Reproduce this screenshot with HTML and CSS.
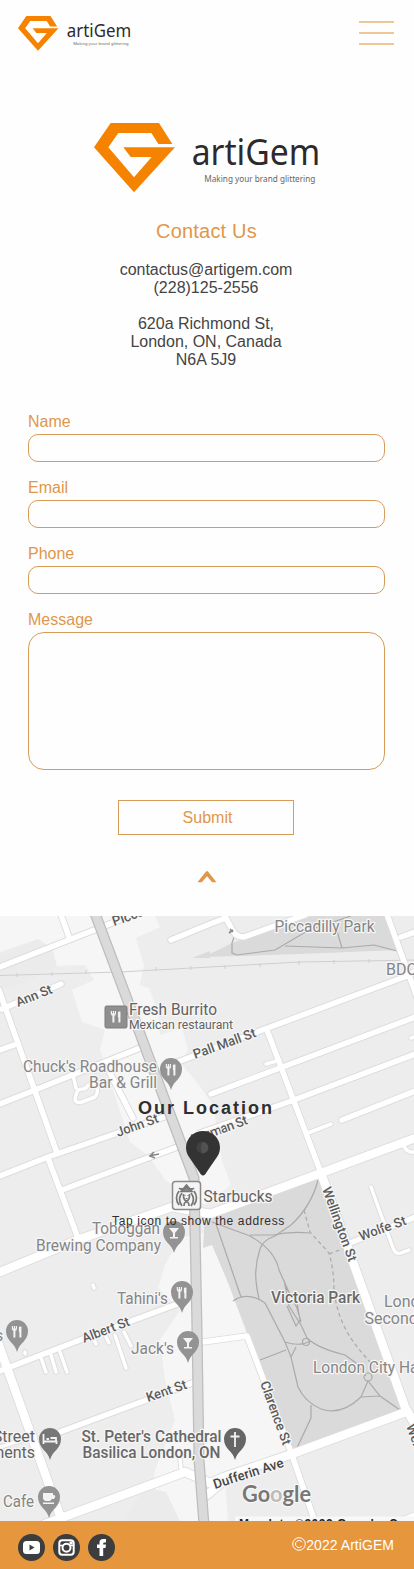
FILE: index.html
```html
<!DOCTYPE html>
<html lang="en">
<head>
<meta charset="utf-8">
<meta name="viewport" content="width=device-width, initial-scale=1">
<title>artiGem - Contact Us</title>
<link rel="stylesheet" href="styles.css">
</head>
<body>
<svg class="defs" width="0" height="0" aria-hidden="true">
  <symbol id="logo" viewBox="45 40 681 210">
    <path fill="#f58300" d="M45 113 95 40H240L280 103H238L217 70H118L88 113 165 203 218 142H155L133 113H288L165 248Z"/>
    <text class="logo-name" x="338" y="165" textLength="386" lengthAdjust="spacingAndGlyphs">artiGem</text>
    <text class="logo-tag" x="376" y="217" textLength="333" lengthAdjust="spacingAndGlyphs">Making your brand glittering</text>
  </symbol>
</svg>

<header class="topbar">
  <svg class="logo-small"><use href="#logo"/></svg>
  <div class="menu"><span></span><span></span><span></span></div>
</header>

<main>
  <section class="contact">
    <svg class="logo-large"><use href="#logo"/></svg>
    <h1>Contact Us</h1>
    <p>contactus@artigem.com<br>(228)125-2556</p>
    <p>620a Richmond St,<br>London, ON, Canada<br>N6A 5J9</p>
  </section>

  <form class="form">
    <label>Name<input type="text"></label>
    <label>Email<input type="text"></label>
    <label>Phone<input type="text"></label>
    <label>Message<textarea></textarea></label>
    <button type="button">Submit</button>
  </form>

  <div class="to-top">
    <svg width="20" height="12" viewBox="0 0 20 12"><path d="M0.5 11.2 9.2 0.3H10.8L19.5 11.2H15.2L10 5.2 4.8 11.2Z" fill="#e0974a"/></svg>
  </div>

  <section class="location">
    <svg class="map" viewBox="0 916 414 605" preserveAspectRatio="none">
      <defs>
        <g id="lanes">
          <path d="M73 1075 76 1088M41 1358 46 1372M51 1355 56 1372M60 1352 67 1372M115 1335 126 1368M124 1332 131 1346M93 1337 96 1344M106 1337 109 1343M25 1354V1352M93 1285 94 1288"/>
          <path d="M77 1092Q78 1089 83 1089L86 1088Q89 1082 95 1085 100 1090 95 1097L82 1102Q75 1104 75 1098Z"/>
          <path d="M0 1447 35 1436M266 1064 280 1060M308 1133 331 1124M411 1038 418 1036M404 1146Q407 1153 414 1152M371 1187 393 1248Q396 1255 401 1253L409 1250M180 1459 181 1468"/>
        </g>
        <g id="streets">
          <path d="M0 967 102 927 150 908M60 912 69 937M171 940 210 924 226 918M222 911 233 931Q236 937 244 937L305 915"/>
          <path d="M2 1009 61 984M-1 990 57 1153M48 1158 78 1238M0 1050 14 1045M0 1104 35 1090 140 1048M110 1073 133 1118"/>
          <path d="M0 1176 48 1157 167 1116M62 1190 180 1146M175 1063 265 1029 407 976 418 970M267 1030 321 1173"/>
          <path d="M211 1094 280 1068 418 1016M200 1133 294 1100 418 1053M342 1120 418 1090M350 1243 418 1216M401 937 418 931"/>
          <path d="M0 1371 80 1340 180 1303M60 1432 195 1382M203 1342 247 1336 292 1455 316 1525M385 909 418 1000M400 1521 418 1514"/>
        </g>
        <g id="avenues">
          <path d="M0 1272 80 1239 172 1207 210 1214 321 1173 418 1137M321 1173 405 1407 418 1430"/>
          <path d="M-4 1337 62 1521M45 1524 185 1472 210 1483 224 1477 292 1454 406 1412M207 1495 230 1476"/>
        </g>
        <g id="pin"><path d="M0 20C-2 11-11 9-11-1A11 11 0 0 1 11-1C11 9 2 11 0 20Z"/></g>
        <g id="fork" fill="none" stroke="#f3f3f3">
          <path stroke-width="1.2" d="M-4.6-6V-2.5M-2.6-6V-1.5M-.6-6V-2.5"/><path stroke-width="2" d="M-2.6-2V5.5M3.4-5.5V5.5"/><path stroke-width="2.2" d="M-4.6-2.5H-.6M3-5V0"/>
        </g>
        <g id="glass"><path fill="#f3f3f3" d="M-5-5H5L1 0V4H4V5.5H-4V4H-1V0Z"/></g>
      </defs>

      <rect y="916" width="414" height="605" fill="#ededed"/>
      <g fill="#f6f6f6">
        <path d="M0 916H155L160 927 136 938 144 965 140 985 149 988 158 1012 160 1035 182 1028 188 1050 180 1062 199 1085 213 1105 222 1160 231 1185 205 1205 165 1180 160 1172 147 1155 130 1142 100 1050 105 1030 82 1022 72 990 94 980 85 965 55 966 50 947 38 939 0 952Z"/>
        <path d="M165 1265 180 1238 207 1232 230 1288 292 1455 225 1480 228 1521H150L155 1470 175 1420 165 1380 160 1340 180 1310 158 1288Z"/>
      </g>
      <path fill="#ebebeb" d="M125 1521 145 1487 166 1492 180 1521ZM0 955 38 939 53 950 57 967 20 985 0 990Z"/>
      <path fill="#dadada" d="M204 957 232 943 310 916H388L399 950 300 954ZM205 1215 319 1179 404 1411 293 1454 227 1280 212 1245 203 1248ZM192 958 210 951V958Z"/>
      <g class="rail"><path d="M0 975.5 120 972 300 962 418 960M17 973V977M52 972V976M86 970V974M156 967V971M191 966V970M225 965V969M260 963V967M299 961V965M334 960V964M369 959V963"/></g>
      <g class="trail">
        <path d="M235 934 232 943V953L237 955 275 950 309 930 351 916M285 946 342 948 374 945 397 951M337 931 342 948"/>
        <path d="M318 1180C313 1200 304 1213 291 1225L275 1236Q263 1240 260 1249C253 1270 256 1285 259 1299"/>
        <path d="M212 1222 250 1236Q275 1250 279 1270L288 1290 297 1308 301 1322M250 1235H273Q290 1231 310 1233M216 1224 241 1297M233 1301Q248 1291 265 1303L285 1342 291 1357 298 1387Q305 1402 321 1409 341 1416 361 1397L368 1381 380 1396 400 1410M260 1360 286 1350M285 1342Q300 1347 310 1341M284 1280 289 1306 301 1325 307 1338Q317 1348 345 1355L356 1363 366 1376M285 1287 297 1303 300 1320 296 1326 287 1306M311 1405 311 1418 295 1452M361 1397 380 1396M285 1342 291 1357 296 1347"/>
        <circle cx="306" cy="1342" r="3.5"/><circle cx="368" cy="1377" r="4"/>
        <path stroke-dasharray="4 3" d="M304 1210 310 1232 329 1253Q334 1270 334 1290C338 1325 353 1343 370 1362M329 1254 350 1246"/>
      </g>
      <use href="#lanes" class="lane-edge"/><use href="#streets" class="street-edge"/><use href="#avenues" class="avenue-edge"/>
      <use href="#lanes" class="lane"/><use href="#streets" class="street"/><use href="#avenues" class="avenue"/>
      <path class="main-edge" d="M93 908 194 1178 197 1330 199 1460 204 1525"/>
      <path class="main-road" d="M93 908 194 1178 197 1330 199 1460 204 1525"/>
      <path fill="none" stroke="#888" stroke-width="1.6" d="M149 1156 159 1154M154 1152 150 1156 155 1158M230 929 233 932M229 933 233 930"/>

      <g class="pins">
        <rect x="105" y="1006" width="22" height="22" rx="1.5" fill="#8f8f8f" stroke="#7d7d7d"/>
        <use href="#fork" x="116" y="1017"/>
        <use href="#pin" x="171" y="1070"/><use href="#fork" x="171" y="1070"/>
        <use href="#pin" x="174" y="1233"/><use href="#glass" x="174" y="1233"/>
        <use href="#pin" x="182" y="1293"/><use href="#fork" x="182" y="1293"/>
        <use href="#pin" x="188" y="1343"/><use href="#glass" x="188" y="1343"/>
        <use href="#pin" x="17" y="1332"/><use href="#fork" x="17" y="1332"/>
        <use href="#pin" x="50" y="1440" fill="#777"/>
        <path fill="none" stroke="#f3f3f3" stroke-width="1.8" d="M43.5 1434V1444M43.5 1441.5H56.5V1444M46.5 1439H49M50.5 1438H56V1442"/>
        <use href="#pin" x="49" y="1498"/>
        <path fill="#f3f3f3" d="M43 1493H53V1495Q57 1495 54 1499H52L50 1501H45L43 1499ZM43 1502.5H54V1504H43Z"/>
        <g fill="#666"><use href="#pin" x="235" y="1440"/></g>
        <path fill="none" stroke="#f3f3f3" stroke-width="1.8" d="M235 1432V1447M230.5 1436.5H239.5"/>
        <rect x="172.5" y="1181.5" width="28" height="28" rx="3" fill="#f4f4f4" stroke="#8a8a8a" stroke-width="1.5"/>
        <g fill="none" stroke="#777" stroke-width="1.7">
          <path d="M179 1188Q182 1191 186.5 1187 191 1191 194 1188M181 1191.5 186.5 1185 192 1191.5Z" fill="#8a8a8a"/>
          <path d="M179 1191Q174 1198 179 1205M194 1191Q199 1198 194 1205M182 1193Q177 1199 182 1206M191 1193Q196 1199 191 1206M183.5 1194Q183 1200 186.5 1201 190 1200 189.5 1194M184 1206Q184 1202 186.5 1202 189 1202 189 1206"/>
          <path stroke-width="1.2" d="M184.5 1195.5H185.5M187.5 1195.5H188.5M185.5 1198.5H187.5"/>
        </g>
      </g>

      <g class="street-name">
        <text transform="translate(114 926) rotate(-19)">Piccadilly St</text>
        <text transform="translate(18 1007) rotate(-22)" textLength="38">Ann St</text>
        <text transform="translate(195 1059) rotate(-20)" textLength="66">Pall Mall St</text>
        <text transform="translate(118 1137) rotate(-20)" textLength="44">John St</text>
        <text transform="translate(193 1144) rotate(-20)" textLength="59">Norman St</text>
        <text transform="translate(322 1189) rotate(70)" textLength="78">Wellington St</text>
        <text transform="translate(361 1241) rotate(-20)" textLength="49">Wolfe St</text>
        <text transform="translate(84 1343) rotate(-21)" textLength="50">Albert St</text>
        <text transform="translate(148 1402) rotate(-19)" textLength="42">Kent St</text>
        <text transform="translate(260 1383) rotate(70)" textLength="67">Clarence St</text>
        <text transform="translate(215 1489) rotate(-18)" textLength="73" class="dark">Dufferin Ave</text>
        <text transform="translate(406 1426) rotate(70)" textLength="78">Wellington St</text>
      </g>
      <g class="place">
        <text x="274.5" y="932" textLength="100" lengthAdjust="spacingAndGlyphs">Piccadilly Park</text>
        <text x="386" y="974.5">BDO</text>
        <text x="129" y="1014.5" textLength="88" lengthAdjust="spacingAndGlyphs" class="food">Fresh Burrito</text>
        <text x="129" y="1028.5" textLength="104" lengthAdjust="spacingAndGlyphs" class="food sub">Mexican restaurant</text>
        <text x="23" y="1072" textLength="134" lengthAdjust="spacingAndGlyphs">Chuck's Roadhouse</text>
        <text x="89" y="1088" textLength="68" lengthAdjust="spacingAndGlyphs">Bar &amp; Grill</text>
        <text x="203.5" y="1202" textLength="69" lengthAdjust="spacingAndGlyphs" class="food">Starbucks</text>
        <text x="92" y="1234" textLength="68" lengthAdjust="spacingAndGlyphs">Toboggan</text>
        <text x="36" y="1251" textLength="125" lengthAdjust="spacingAndGlyphs">Brewing Company</text>
        <text x="117" y="1303.5" textLength="51" lengthAdjust="spacingAndGlyphs">Tahini's</text>
        <text x="131" y="1353.5" textLength="43" lengthAdjust="spacingAndGlyphs">Jack's</text>
        <text x="-5" y="1340.5">s</text>
        <text x="271" y="1303" textLength="89" lengthAdjust="spacingAndGlyphs" class="strong">Victoria Park</text>
        <text x="384" y="1307">London</text>
        <text x="364.5" y="1323.5">Second</text>
        <text x="313" y="1373" textLength="113" lengthAdjust="spacingAndGlyphs">London City Hall</text>
        <text x="35" y="1442" text-anchor="end" class="food">Street</text>
        <text x="35" y="1457.5" text-anchor="end" class="food">ments</text>
        <text x="3" y="1506.5" textLength="31" lengthAdjust="spacingAndGlyphs">Cafe</text>
        <text x="81.5" y="1442" textLength="140" lengthAdjust="spacingAndGlyphs" class="strong">St. Peter's Cathedral</text>
        <text x="82.5" y="1458" textLength="138" lengthAdjust="spacingAndGlyphs" class="strong">Basilica London, ON</text>
      </g>
      <text class="brand" x="242" y="1501.5" textLength="69" lengthAdjust="spacingAndGlyphs">Go<tspan fill="#bcbcbc">o</tspan>gle</text>
      <rect x="235" y="1516.5" width="179" height="5" fill="#f8f8f8"/>
      <text class="credit" x="239" y="1528" textLength="196">Mapdata ©2022 Google, Canada</text>
    </svg>
    <div class="overlay">
      <h2>Our Location</h2>
      <svg class="marker" width="34" height="45" viewBox="0 0 34 45"><path d="M17 44.500C15.500 44.500 14.500 43 13 40.500L3 26C1 23 0 20 0 16.500A17 16.500 0 0 1 34 16.500C34 20 33 23 31 26L21 40.500C19.500 43 18.500 44.500 17 44.500Z" fill="#333334"/><circle cx="16.500" cy="16.500" r="6" fill="#414141"/><path d="M16.500 11A5.500 5.500 0 0 1 16.500 22.500Q13.500 17 16.500 11Z" fill="#525252"/></svg>
      <p>Tap icon to show the address</p>
    </div>
  </section>
</main>

<footer class="footer">
  <div class="social">
    <svg width="27" height="27" viewBox="0 0 27 27"><circle cx="13.500" cy="13.500" r="13.500" fill="#3d3d3d"/><rect x="5" y="7" width="17" height="13" rx="3.500" fill="#fff"/><path d="M11.500 10.500 16.500 13.500 11.500 16.500Z" fill="#3d3d3d"/></svg>
    <svg width="27" height="27" viewBox="0 0 27 27"><circle cx="13.500" cy="13.500" r="13.500" fill="#3d3d3d"/><rect x="6.300" y="6.300" width="14.400" height="14.400" rx="3" fill="none" stroke="#fff" stroke-width="2"/><path d="M6 11.500H10M17 11.500H21" stroke="#fff" stroke-width="1.500"/><circle cx="13.500" cy="13.800" r="4" fill="none" stroke="#fff" stroke-width="2"/><rect x="16.500" y="7.500" width="3" height="3" fill="#fff"/></svg>
    <svg width="27" height="27" viewBox="0 0 27 27"><circle cx="13.500" cy="13.500" r="13.500" fill="#3d3d3d"/><path d="M11.500 22V14H9V10.500H11.500V8.500Q11.500 5 15 5H18V8.500H16.200Q15.200 8.500 15.200 9.500V10.500H18L17.500 14H15.200V22Z" fill="#fff"/></svg>
  </div>
  <span class="copyright"><svg width="14" height="14" viewBox="0 0 14 14"><g fill="none" stroke="#fff"><circle cx="7" cy="7" r="6.300"/><path d="M10 5.200A3.500 3.500 0 1 0 10 8.800"/></g></svg>2022 ArtiGEM</span>
</footer>
</body>
</html>
```

FILE: styles.css
```css
* { box-sizing: border-box; }
body {
  margin: 0;
  background: #fefefe;
  color: #444;
  font: 16px/18px "Liberation Sans", Arial, sans-serif;
}
svg { display: block; }
.defs { position: absolute; }
.logo-name { font: 108px "Noto Sans", "Open Sans", sans-serif; fill: #2e2a2b; }
.logo-tag { font: 26px "Noto Sans", "Open Sans", sans-serif; fill: #666; }

.topbar {
  display: flex;
  justify-content: space-between;
  align-items: flex-start;
  height: 66px;
  padding: 15.5px 20px 0 18px;
}
.logo-small { width: 113.5px; height: 35px; }
.menu { display: grid; gap: 9px; padding-top: 5.5px; }
.menu span { width: 35px; height: 2px; background: #edc795; }

.contact {
  display: flex;
  flex-direction: column;
  align-items: center;
  padding-top: 57px;
  text-align: center;
}
.logo-large { width: 227px; height: 70px; margin-left: 1px; }
h1 {
  margin: 26px 1px 18px 0;
  color: #e0974a;
  font-size: 20px;
  font-weight: 400;
  line-height: 24px;
  letter-spacing: .2px;
}
.contact p { margin: 0 2px 18px 0; }

.form {
  display: flex;
  flex-direction: column;
  align-items: center;
  gap: 17px;
  padding: 26px 29px 0 28px;
  color: #e0974a;
}
.form label { display: grid; gap: 3px; width: 100%; }
.form input, .form textarea {
  width: 100%;
  height: 28px;
  margin: 0;
  border: 1px solid #d79c58;
  border-radius: 10px;
  background: transparent;
  resize: none;
  outline: 0;
}
.form textarea { height: 138px; border-radius: 16px; }
.form button {
  width: 176px;
  height: 35px;
  margin: 13px 1px 0 0;
  padding: 0 0 0 3px;
  border: 1px solid #d79c58;
  background: transparent;
  color: #e0974a;
  font: inherit;
}
.to-top { display: flex; justify-content: center; height: 81px; padding-top: 36px; }

.location { position: relative; height: 605px; overflow: hidden; }
.map { width: 414px; height: 605px; font-family: Roboto, sans-serif; }
.overlay {
  position: absolute;
  inset: 0;
  display: flex;
  flex-direction: column;
  align-items: center;
  padding-top: 182px;
  color: #2f2f30;
}
.overlay h2 { margin: 0; padding-right: 2px; font-size: 18px; line-height: 21px; letter-spacing: 2px; }
.marker { margin: 12px 9px 38px 0; }
.overlay p { margin: 0; padding-right: 17px; font-size: 12px; line-height: 14px; letter-spacing: .62px; white-space: nowrap; }

.rail, .trail { fill: none; stroke: #cfcfcf; }
.trail { stroke: #aaa; stroke-width: 1.2; }
.lane, .lane-edge, .street, .street-edge, .avenue, .avenue-edge { fill: none; stroke: #fff; stroke-linecap: round; stroke-linejoin: round; }
.lane { stroke-width: 3.5; }
.street { stroke-width: 5.5; }
.avenue { stroke-width: 8.5; }
.lane-edge { stroke: #dcdcdc; stroke-width: 5.3; }
.street-edge { stroke: #dcdcdc; stroke-width: 7.3; }
.avenue-edge { stroke: #dcdcdc; stroke-width: 10.3; }
.main-edge { fill: none; stroke: #bdbdbd; stroke-width: 11; }
.main-road { fill: none; stroke: #dadada; stroke-width: 8.5; }
.pins { fill: #939393; }
.street-name text, .place text { paint-order: stroke; stroke: #f6f6f6; stroke-width: 2.5px; stroke-linejoin: round; }
.street-name { font-size: 13.3px; font-weight: 500; fill: #5c5c5c; }
.dark { fill: #444; }
.place { font-size: 16px; fill: #858585; }
.place .food { fill: #626262; }
.place .sub { font-size: 12.5px; }
.place .strong { font-weight: 500; fill: #686868; }
.brand { font: 700 22px Lato, sans-serif; fill: #777; paint-order: stroke; stroke: #fafafa; stroke-width: 2px; }
.credit { font: 700 12px "Liberation Sans", sans-serif; fill: #222; }

.footer {
  display: flex;
  justify-content: space-between;
  align-items: flex-start;
  height: 48px;
  padding: 13px 20px 0 18px;
  background: #e6963c;
  color: #fff;
}
.social { display: flex; gap: 8px; }
.copyright { display: flex; padding-top: 3px; font-size: 14px; line-height: 16px; letter-spacing: .05px; white-space: nowrap; }
```
